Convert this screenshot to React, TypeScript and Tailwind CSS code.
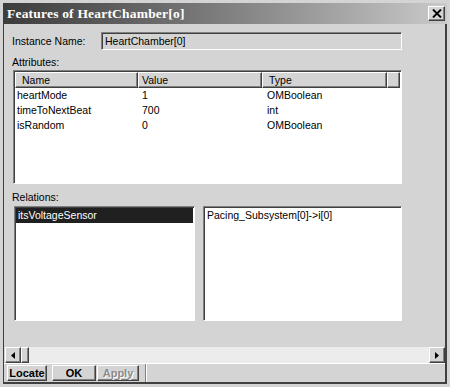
const ui = "font-['Liberation_Sans',Arial,sans-serif] text-[10.5px] leading-none text-black";

const raised =
  "border border-t-white border-l-white border-r-[#404040] border-b-[#404040] shadow-[inset_-1px_-1px_0_#808080] bg-[#d4d4d4]";
const sunken =
  "border border-t-[#808080] border-l-[#808080] border-r-white border-b-white shadow-[inset_1px_1px_0_#404040]";

const attributes = [
  { name: "heartMode", value: "1", type: "OMBoolean" },
  { name: "timeToNextBeat", value: "700", type: "int" },
  { name: "isRandom", value: "0", type: "OMBoolean" },
];

function HeaderCell({ label, w, pad }: { label: string; w: string; pad: string }) {
  return (
    <div className={`${raised} ${w} ${pad} h-[16px] flex items-center shrink-0`}>
      {label}
    </div>
  );
}

export default function App() {
  return (
    <div className={`${ui} w-[450px] h-[387px] bg-[#d4d4d4] p-[3px] flex flex-col overflow-hidden`}>
      {/* title bar */}
      <div className="h-[21px] flex items-center justify-between bg-gradient-to-r from-[#3c3c3c] to-[#cacaca] pl-[4px] pr-[2px]">
        <span className="font-['Liberation_Serif','DejaVu_Serif',serif] font-bold text-[13.5px] text-white tracking-[0.2px]">
          Features of HeartChamber[o]
        </span>
        <div className={`${raised} w-[17px] h-[15px] flex items-center justify-center`}>
          <svg width="10" height="9" viewBox="0 0 10 9">
            <path d="M1 0.5 L9 8.5 M9 0.5 L1 8.5" stroke="#000" strokeWidth="1.9" />
          </svg>
        </div>
      </div>

      {/* content */}
      <div className="flex-1 flex flex-col border-l border-l-[#404040] border-r-2 border-r-[#404040] border-b-2 border-b-[#404040] pt-[8px]">
        <div className="h-[18px] flex items-center">
          <span className="pl-[8px] w-[97px] shrink-0">Instance Name:</span>
          <div className={`${sunken} w-[301px] h-[18px] flex items-center pl-[3px] bg-[#d4d4d4]`}>
            HeartChamber[0]
          </div>
        </div>

        <div className="mt-[5px] h-[14px] flex items-center pl-[8px]">Attributes:</div>

        <div className={`${sunken} mt-[1px] ml-[9px] w-[389px] h-[114px] bg-white p-[1px] flex flex-col`}>
          <div className="flex">
            <HeaderCell label="Name" w="w-[123px]" pad="pl-[6px]" />
            <HeaderCell label="Value" w="w-[124px]" pad="pl-[3px]" />
            <HeaderCell label="Type" w="w-[125px]" pad="pl-[6px]" />
            <div className={`${raised} flex-1 h-[16px]`} />
          </div>
          {attributes.map((a) => (
            <div key={a.name} className="flex h-[15px] items-center">
              <span className="w-[123px] pl-[2px]">{a.name}</span>
              <span className="w-[124px] pl-[4px]">{a.value}</span>
              <span className="w-[125px] pl-[5px]">{a.type}</span>
            </div>
          ))}
        </div>

        <div className="mt-[6px] h-[14px] flex items-center pl-[8px]">Relations:</div>

        <div className="mt-[2px] flex h-[115px]">
          <div className={`${sunken} ml-[10px] w-[181px] bg-white p-[1px]`}>
            <div className="h-[15px] bg-[#202020] text-white flex items-center pl-[2px]">
              itsVoltageSensor
            </div>
          </div>
          <div className={`${sunken} ml-[8px] w-[199px] bg-white p-[1px]`}>
            <div className="h-[15px] flex items-center pl-[2px]">Pacing_Subsystem[0]-&gt;i[0]</div>
          </div>
        </div>

        {/* horizontal scrollbar */}
        <div className="mt-[26px] ml-[1px] w-[440px] h-[16px] flex bg-[#ececec]">
          <div className={`${raised} w-[16px] h-[16px] flex items-center justify-center`}>
            <svg width="4" height="7" viewBox="0 0 4 7">
              <path d="M4 0 L0 3.5 L4 7 Z" fill="#000" />
            </svg>
          </div>
          <div className={`${raised} w-[8px] h-[16px]`} />
          <div className="flex-1" />
          <div className={`${raised} w-[16px] h-[16px] flex items-center justify-center`}>
            <svg width="4" height="7" viewBox="0 0 4 7">
              <path d="M0 0 L4 3.5 L0 7 Z" fill="#000" />
            </svg>
          </div>
        </div>

        {/* button bar */}
        <div className="h-[19px] flex items-center border-t border-t-white font-bold text-[11px]">
          <div className={`${raised} ml-[3px] w-[40px] h-[16px] flex items-center justify-center`}>Locate</div>
          <div className={`${raised} ml-[5px] w-[44px] h-[16px] flex items-center justify-center`}>OK</div>
          <div className={`${raised} ml-[1px] w-[42px] h-[16px] flex items-center justify-center text-[#8a8a8a] [text-shadow:1px_1px_0_#fff]`}>
            Apply
          </div>
          <div className="ml-[6px] flex-1 h-[18px] border-l border-l-[#808080] shadow-[inset_1px_0_0_#fff]" />
        </div>
      </div>
    </div>
  );
}
